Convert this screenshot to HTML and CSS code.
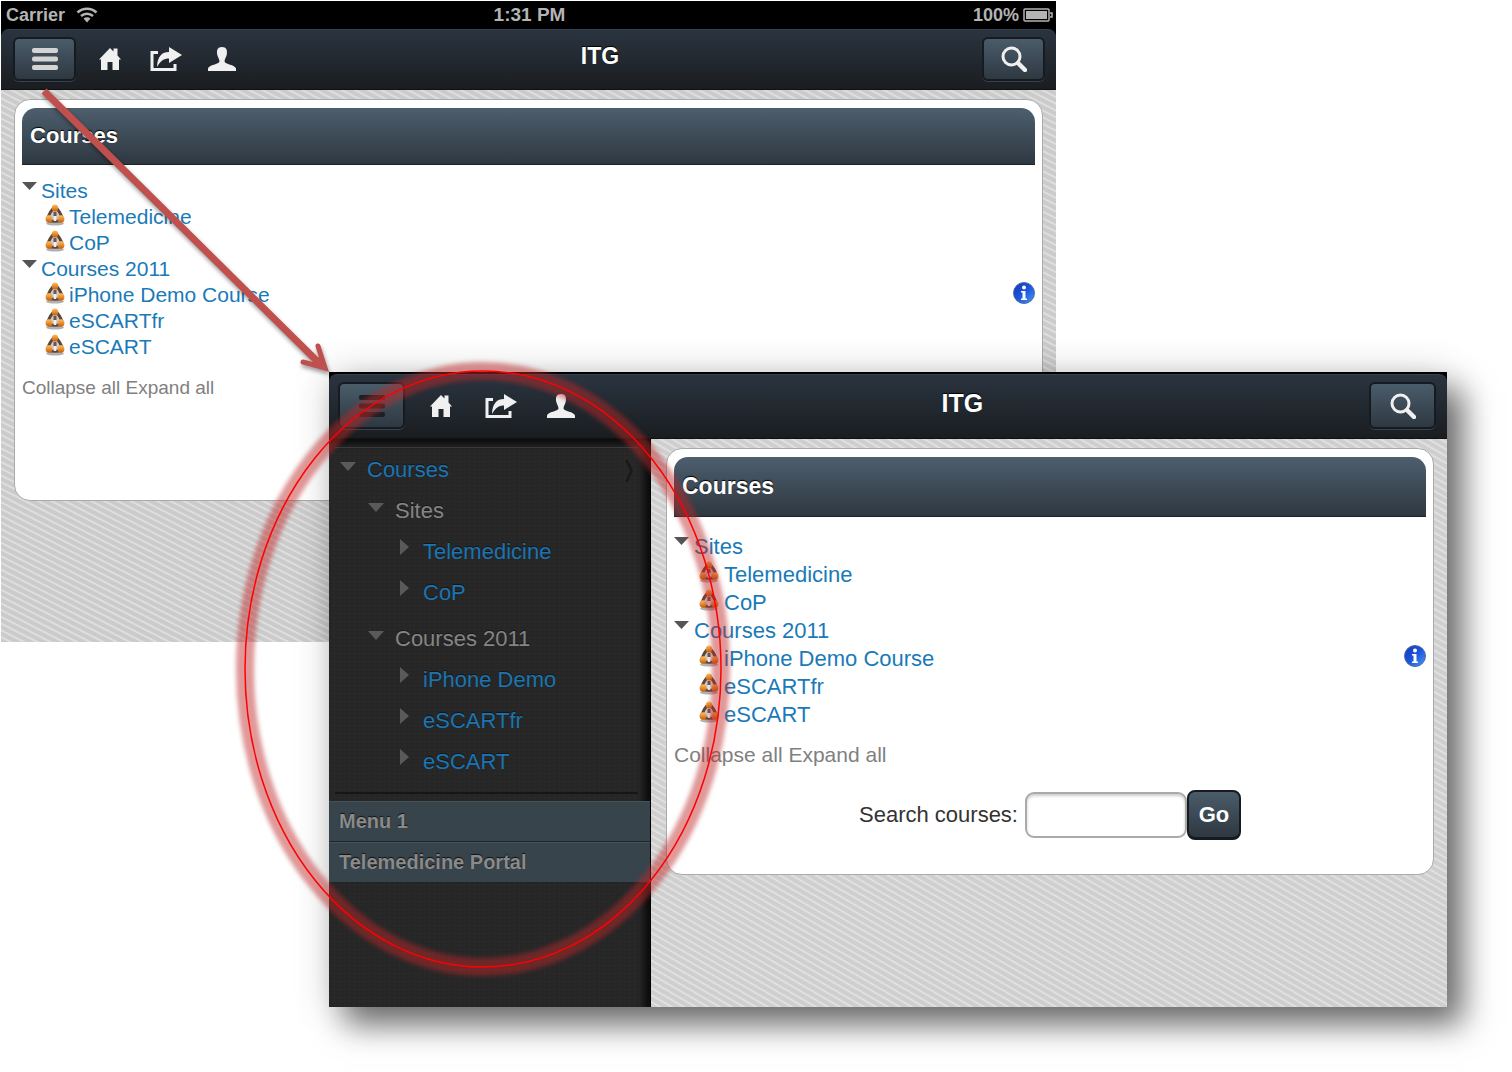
FILE: index.html
```
<!DOCTYPE html>
<html lang="en">
<head>
    <meta charset="UTF-8">
    <meta name="viewport" content="width=device-width, initial-scale=1.0">
    <title>ITG - Courses</title>
    <link rel="stylesheet" href="styles.css">
</head>
<body>
    <!-- Shared icons -->
    <svg class="icon-defs" aria-hidden="true">
        <defs>
            <linearGradient id="orange" x1="0" y1="0" x2="0" y2="1">
                <stop offset="0" stop-color="#ffc35a"/>
                <stop offset="1" stop-color="#c85a08"/>
            </linearGradient>
            <linearGradient id="blue" x1="0" y1="0" x2="1" y2="1">
                <stop offset="0" stop-color="#1438b4"/>
                <stop offset="0.5" stop-color="#1c55dc"/>
                <stop offset="1" stop-color="#4a9cf4"/>
            </linearGradient>
        </defs>
        <symbol id="home" viewBox="0 0 22 24">
            <path d="M11 1 L14.5 4.5 V1.500 H18.500 V8.500 L22 12.500 H20 V23 H13.500 V15 H8.500 V23 H2 V12.500 H0 Z"/>
        </symbol>
        <symbol id="share" viewBox="0 0 32 24">
            <path d="M8 5.500 H2 V22.500 H25 V17" fill="none" stroke="currentColor" stroke-width="3"/>
            <path d="M7 20 C7.500 9 12 5 19 5 V0 L32 8 L19 16 V11.500 C14 11.500 10 14 7 20 Z"/>
        </symbol>
        <symbol id="user" viewBox="0 0 28 24">
            <path d="M14 0 C18.500 0 19.500 3 18.800 7.500 C18.400 10 16.500 12 16.500 14.500 C17 17.500 27 17.500 28 21.500 V24 H0 V21.500 C1 17.500 11 17.500 11.500 14.500 C11.500 12 9.600 10 9.200 7.500 C8.500 3 9.500 0 14 0 Z"/>
        </symbol>
        <symbol id="search" viewBox="0 0 26 26">
            <circle cx="10.500" cy="10.500" r="8.500" fill="none" stroke="currentColor" stroke-width="3"/>
            <path d="M17 17 L24 24" stroke="currentColor" stroke-width="4.500" stroke-linecap="round"/>
        </symbol>
        <symbol id="bars" viewBox="0 0 26 22">
            <rect width="26" height="5" rx="2"/>
            <rect y="8.500" width="26" height="5" rx="2"/>
            <rect y="17" width="26" height="5" rx="2"/>
        </symbol>
        <symbol id="course" viewBox="0 0 20 22">
            <ellipse cx="10" cy="19.500" rx="9" ry="2" fill="#000" opacity="0.3"/>
            <path d="M10 3 C7 5 3 11 3 15 C3 18 17 18 17 15 C17 11 13 5 10 3 Z" fill="#cfc8cc" stroke="#5f4634" stroke-width="3" stroke-linejoin="round"/>
            <path d="M10 8 V12" stroke="#6b5648" stroke-width="3"/>
            <path d="M10 12 V17" stroke="#f4eef0" stroke-width="2.500"/>
            <ellipse cx="10" cy="4" rx="3.200" ry="3.600" fill="url(#orange)"/>
            <ellipse cx="4" cy="15" rx="3.400" ry="3.800" fill="url(#orange)"/>
            <ellipse cx="16" cy="15" rx="3.400" ry="3.800" fill="url(#orange)"/>
        </symbol>
        <symbol id="info" viewBox="0 0 22 22">
            <circle cx="11" cy="11" r="10.500" fill="url(#blue)" stroke="#4a6cae" stroke-width="1"/>
            <circle cx="11" cy="5.500" r="2" fill="#fff"/>
            <path d="M8 9 H12.500 V16.500 H14 V18 H8 V16.500 H9.500 V10.500 H8 Z" fill="#fff"/>
        </symbol>
        <symbol id="wifi" viewBox="0 0 22 16">
            <path d="M1.500 5.500 C7 0.500 15 0.500 20.500 5.500 M5 9 C8.500 6 13.500 6 17 9" fill="none" stroke="currentColor" stroke-width="2.600"/>
            <path d="M7.500 11.500 C9.500 9.800 12.500 9.800 14.500 11.500 L11 15.500 Z"/>
        </symbol>
        <symbol id="battery" viewBox="0 0 30 14">
            <rect x="1" y="1" width="25" height="12" rx="1" fill="none" stroke="currentColor" stroke-width="1.500"/>
            <rect x="3" y="3" width="21" height="8"/>
            <path d="M27 5 H29 V9 H27" fill="none" stroke="currentColor" stroke-width="1.500"/>
        </symbol>
    </svg>

    <main class="stage">
        <section class="window window-back">
            <div class="status-bar">
                <span class="carrier">Carrier <svg class="wifi"><use href="#wifi"/></svg></span>
                <span class="clock">1:31 PM</span>
                <span class="power">100% <svg class="battery"><use href="#battery"/></svg></span>
            </div>
            <header class="toolbar">
                <nav class="toolbar-nav">
                    <button class="tool-btn" type="button" aria-label="Menu"><svg class="bars"><use href="#bars"/></svg></button>
                    <a href="#" class="nav-icon" aria-label="Home"><svg class="home"><use href="#home"/></svg></a>
                    <a href="#" class="nav-icon" aria-label="Share"><svg class="share"><use href="#share"/></svg></a>
                    <a href="#" class="nav-icon" aria-label="Profile"><svg class="user"><use href="#user"/></svg></a>
                </nav>
                <h1>ITG</h1>
                <button class="tool-btn search-btn" type="button" aria-label="Search"><svg class="search"><use href="#search"/></svg></button>
            </header>
            <div class="content">
                <div class="card">
                    <h2>Courses</h2>
                    <ul class="tree">
                        <li class="group"><a href="#">Sites</a></li>
                        <li><svg class="course"><use href="#course"/></svg><a href="#">Telemedicine</a></li>
                        <li><svg class="course"><use href="#course"/></svg><a href="#">CoP</a></li>
                        <li class="group"><a href="#">Courses 2011</a></li>
                        <li><svg class="course"><use href="#course"/></svg><a href="#">iPhone Demo Course</a><a href="#" class="info-link" aria-label="Summary"><svg class="info"><use href="#info"/></svg></a></li>
                        <li><svg class="course"><use href="#course"/></svg><a href="#">eSCARTfr</a></li>
                        <li><svg class="course"><use href="#course"/></svg><a href="#">eSCART</a></li>
                    </ul>
                    <p class="tree-actions"><a href="#">Collapse all</a> <a href="#">Expand all</a></p>
                </div>
            </div>
        </section>

        <section class="window window-front">
            <header class="toolbar">
                <nav class="toolbar-nav">
                    <button class="tool-btn active" type="button" aria-label="Menu"><svg class="bars"><use href="#bars"/></svg></button>
                    <a href="#" class="nav-icon" aria-label="Home"><svg class="home"><use href="#home"/></svg></a>
                    <a href="#" class="nav-icon" aria-label="Share"><svg class="share"><use href="#share"/></svg></a>
                    <a href="#" class="nav-icon" aria-label="Profile"><svg class="user"><use href="#user"/></svg></a>
                </nav>
                <h1>ITG</h1>
                <button class="tool-btn search-btn" type="button" aria-label="Search"><svg class="search"><use href="#search"/></svg></button>
            </header>
            <div class="panes">
                <aside class="sidebar">
                    <ul class="menu">
                        <li class="open"><a href="#">Courses</a>
                            <svg class="chevron" viewBox="0 0 10 24"><path d="M1 1 H4 L9 12 L4 23 H1 L6 12 Z"/></svg>
                        </li>
                        <li class="open level-2"><span>Sites</span></li>
                        <li class="level-3"><a href="#">Telemedicine</a></li>
                        <li class="level-3"><a href="#">CoP</a></li>
                        <li class="open level-2 spaced"><span>Courses 2011</span></li>
                        <li class="level-3"><a href="#">iPhone Demo</a></li>
                        <li class="level-3"><a href="#">eSCARTfr</a></li>
                        <li class="level-3"><a href="#">eSCART</a></li>
                    </ul>
                    <a href="#" class="menu-link">Menu 1</a>
                    <a href="#" class="menu-link">Telemedicine Portal</a>
                </aside>
                <div class="content">
                    <div class="card">
                        <h2>Courses</h2>
                        <ul class="tree">
                            <li class="group"><a href="#">Sites</a></li>
                            <li><svg class="course"><use href="#course"/></svg><a href="#">Telemedicine</a></li>
                            <li><svg class="course"><use href="#course"/></svg><a href="#">CoP</a></li>
                            <li class="group"><a href="#">Courses 2011</a></li>
                            <li><svg class="course"><use href="#course"/></svg><a href="#">iPhone Demo Course</a><a href="#" class="info-link" aria-label="Summary"><svg class="info"><use href="#info"/></svg></a></li>
                            <li><svg class="course"><use href="#course"/></svg><a href="#">eSCARTfr</a></li>
                            <li><svg class="course"><use href="#course"/></svg><a href="#">eSCART</a></li>
                        </ul>
                        <p class="tree-actions"><a href="#">Collapse all</a> <a href="#">Expand all</a></p>
                        <form class="search-form">
                            <label for="q">Search courses:</label>
                            <input type="text" id="q">
                            <button type="submit">Go</button>
                        </form>
                    </div>
                </div>
            </div>
        </section>

        <!-- Arrow and highlight ring drawn over both windows -->
        <svg class="annotations" viewBox="0 0 1512 1072" preserveAspectRatio="none" aria-hidden="true">
            <ellipse class="ring-glow" cx="483" cy="669" rx="238" ry="298"/>
            <ellipse class="ring" cx="483" cy="669" rx="238" ry="298"/>
            <g class="arrow">
                <path d="M44 91 L320 364"/>
                <path class="arrow-head" d="M318 346 L325 368 L303 362"/>
                <path class="arrow-tip" d="M329 372 L321 355 L311 364 Z"/>
            </g>
        </svg>
    </main>
</body>
</html>
```
FILE: styles.css
```
* {
    margin: 0;
    padding: 0;
    box-sizing: border-box;
}

body {
    background: #fff;
    color: #333;
    font-family: "Liberation Sans", Arial, sans-serif;
}

a {
    color: #1a7ab8;
    text-decoration: none;
}

ul {
    list-style: none;
}

svg {
    display: block;
    fill: currentColor;
}

.icon-defs {
    position: absolute;
    width: 0;
    height: 0;
}

/* Two overlapping windows */
.stage {
    position: relative;
    display: grid;
    grid-template-columns: 329fr 727fr 391fr 65fr;
    align-items: start;
    padding-bottom: 65px;
    overflow: hidden;
}

.window {
    --text: 21px;
    --row: 26px;
    grid-row: 1;
    display: flex;
    flex-direction: column;
    background: #000;
}

.window-back {
    grid-column: 1 / 3;
    min-height: 641px;
    margin: 1px 0 0 1px;
}

.window-front {
    --text: 22px;
    --row: 28px;
    grid-column: 2 / 4;
    min-height: 635px;
    margin-top: 372px;
    padding-top: 2px;
    box-shadow: 16px 18px 30px rgba(0, 0, 0, 0.55), 0 0 36px rgba(0, 0, 0, 0.15);
}

/* Status bar */
.status-bar {
    display: grid;
    grid-template-columns: 1fr auto 1fr;
    align-items: center;
    height: 28px;
    padding: 0 3px 0 5px;
    color: #b4b4b4;
    font-size: 18px;
    font-weight: bold;
}

.carrier,
.power {
    display: flex;
    align-items: center;
    gap: 11px;
}

.clock {
    font-size: 19px;
}

.power {
    justify-content: flex-end;
    gap: 4px;
}

.wifi {
    width: 22px;
    height: 16px;
}

.battery {
    width: 30px;
    height: 14px;
}

/* Toolbar */
.toolbar {
    display: grid;
    grid-template-columns: 4fr auto 3fr;
    align-items: center;
    height: 61px;
    padding: 0 11px 1px 12px;
    border-top: 1px solid #35424e;
    border-bottom: 1px solid #111;
    border-radius: 8px 8px 0 0;
    background: linear-gradient(#2a3440, #1a1d20);
    color: #eee;
}

.toolbar h1 {
    padding-bottom: 6px;
    color: #fff;
    font-size: 23px;
    line-height: 28px;
    text-shadow: 0 -1px 1px #000;
}

.toolbar-nav {
    display: flex;
    align-items: center;
}

.tool-btn {
    display: flex;
    align-items: center;
    justify-content: center;
    width: 63px;
    height: 44px;
    border: 2px solid #151b20;
    border-radius: 6px;
    background: linear-gradient(#4a5c6a, #2e3841);
    box-shadow: 0 1px 0 #36424c;
    color: #d4d4d4;
}

.tool-btn.active {
    color: #1b1f23;
}

.search-btn {
    justify-self: end;
    color: #f0f0f0;
}

.nav-icon {
    display: flex;
    justify-content: center;
    width: 56px;
    color: #f0f0f0;
}

.nav-icon:first-of-type {
    margin-left: 6px;
}

.bars {
    width: 26px;
    height: 22px;
}

.home {
    width: 22px;
    height: 24px;
}

.share {
    width: 32px;
    height: 24px;
}

.user {
    width: 28px;
    height: 24px;
}

.search {
    width: 26px;
    height: 26px;
}

.window-front .toolbar {
    height: 65px;
    padding: 0 11px 2px 9px;
}

.window-front .toolbar h1 {
    font-size: 25px;
}

.window-front .tool-btn {
    width: 67px;
    height: 47px;
}

.window-front .nav-icon {
    width: 60px;
}

/* Content card */
.content {
    flex: 1;
    padding: 9px 13px;
    background: repeating-linear-gradient(27deg, #cbcbcb 0, #cbcbcb 3px, #dedede 4px, #dedede 5px, #cbcbcb 6px);
}

.card {
    min-height: 402px;
    padding: 8px 7px;
    border: 1px solid #aaa;
    border-radius: 16px;
    background: #fff;
}

.card h2 {
    padding: 0 8px;
    border-bottom: 1px solid #1c242b;
    border-radius: 14px 14px 0 0;
    background: linear-gradient(#4d5e6d, #2e3841);
    color: #fff;
    font-size: 22px;
    line-height: 56px;
    text-shadow: 0 -1px 1px #000;
}

.tree {
    padding-top: 13px;
    font-size: var(--text);
    line-height: var(--row);
}

.tree li {
    display: flex;
    gap: 4px;
    height: var(--row);
    padding-left: 23px;
}

.tree .group {
    padding-left: 0;
}

.group::before {
    content: "";
    width: 15px;
    height: 8px;
    margin-top: 4px;
    background: #555;
    clip-path: polygon(0 0, 100% 0, 50% 100%);
}

.course {
    width: 20px;
    height: 22px;
}

.info-link {
    margin-left: auto;
}

.info {
    width: 22px;
    height: 22px;
}

.tree-actions {
    padding-top: 15px;
    font-size: 19px;
    line-height: 26px;
}

.tree-actions a {
    color: #808080;
}

.window-front .content {
    min-width: 0;
    padding: 9px 13px 9px 15px;
    background: repeating-linear-gradient(30deg, #cfcfcf 0, #cfcfcf 3px, #e0e0e0 4px, #e0e0e0 5px, #cfcfcf 6px);
}

.window-front .card {
    min-height: 427px;
}

.window-front h2 {
    font-size: 23px;
    line-height: 59px;
}

.window-front .tree {
    padding-top: 16px;
}

.window-front .tree li {
    gap: 5px;
    padding-left: 25px;
}

.window-front .tree .group {
    padding-left: 0;
}

.window-front .tree-actions {
    padding-top: 13px;
    font-size: 21px;
}

/* Search form */
.search-form {
    display: flex;
    align-items: center;
    justify-content: center;
    padding-top: 22px;
    font-size: 22px;
}

.search-form input {
    width: 162px;
    height: 46px;
    margin-left: 7px;
    padding: 0 10px;
    border: 2px solid #aaa;
    border-radius: 9px;
    box-shadow: inset 0 2px 3px rgba(0, 0, 0, 0.2);
    font: inherit;
}

.search-form button {
    width: 54px;
    height: 50px;
    border: 2px solid #151b20;
    border-bottom-width: 3px;
    border-radius: 8px;
    background: linear-gradient(#4a5c69, #2e3841);
    color: #fff;
    font: bold 22px "Liberation Sans", Arial, sans-serif;
}

/* Sidebar */
.panes {
    flex: 1;
    display: flex;
}

.sidebar {
    flex: 0 0 322px;
    border-right: 1px solid #000;
    background:
        repeating-linear-gradient(90deg, rgba(255, 255, 255, 0.01) 0 1px, transparent 1px 5px),
        repeating-linear-gradient(rgba(0, 0, 0, 0.05) 0 1px, transparent 1px 4px),
        #272728;
    box-shadow: inset -6px 5px 6px #0c0c0c;
}

.menu {
    margin: 8px 12px 7px 6px;
    padding: 1px 0 10px;
    border-top: 1px solid #3a3a3a;
    border-bottom: 2px solid #161616;
    font-size: 22px;
    line-height: 41px;
}

.menu li {
    display: flex;
    padding-left: 5px;
    color: #858585;
    text-shadow: 0 -1px 0 #151515;
}

.menu a {
    color: #1a75b2;
}

.menu li::before {
    content: "";
    width: 9px;
    height: 16px;
    margin: 8px 14px 0 5px;
    background: #5a5a5a;
    clip-path: polygon(0 0, 100% 50%, 0 100%);
}

.menu .open::before {
    width: 16px;
    height: 9px;
    margin: 13px 11px 0 0;
    clip-path: polygon(0 0, 100% 0, 50% 100%);
}

.menu .level-2 {
    padding-left: 33px;
}

.menu .level-3 {
    padding-left: 60px;
}

.menu .spaced {
    margin-top: 5px;
}

.chevron {
    width: 10px;
    height: 24px;
    margin: 10px 4px 0 auto;
    color: #1a1a1a;
}

.menu-link {
    display: block;
    padding-left: 10px;
    border-top: 1px solid #45525a;
    border-bottom: 1px solid #1d252b;
    background: #38444c;
    color: #8a8a8a;
    font-size: 20px;
    font-weight: bold;
    line-height: 39px;
    text-shadow: 0 -1px 1px #111;
}

/* Annotations */
.annotations {
    position: absolute;
    top: 0;
    left: 0;
    width: 100%;
    height: 1072px;
    pointer-events: none;
}

.ring,
.ring-glow {
    fill: none;
    stroke: #f00;
    stroke-width: 1.5;
}

.ring-glow {
    stroke: rgba(190, 40, 40, 0.48);
    stroke-width: 18;
    filter: blur(2px);
}

.arrow {
    fill: none;
    stroke: #c0504d;
    stroke-width: 7;
    filter: drop-shadow(1px 3px 2px rgba(0, 0, 0, 0.4));
}

.arrow-head {
    stroke-width: 5;
    stroke-linecap: round;
}

.arrow-tip {
    fill: #c0504d;
    stroke: none;
}
```
